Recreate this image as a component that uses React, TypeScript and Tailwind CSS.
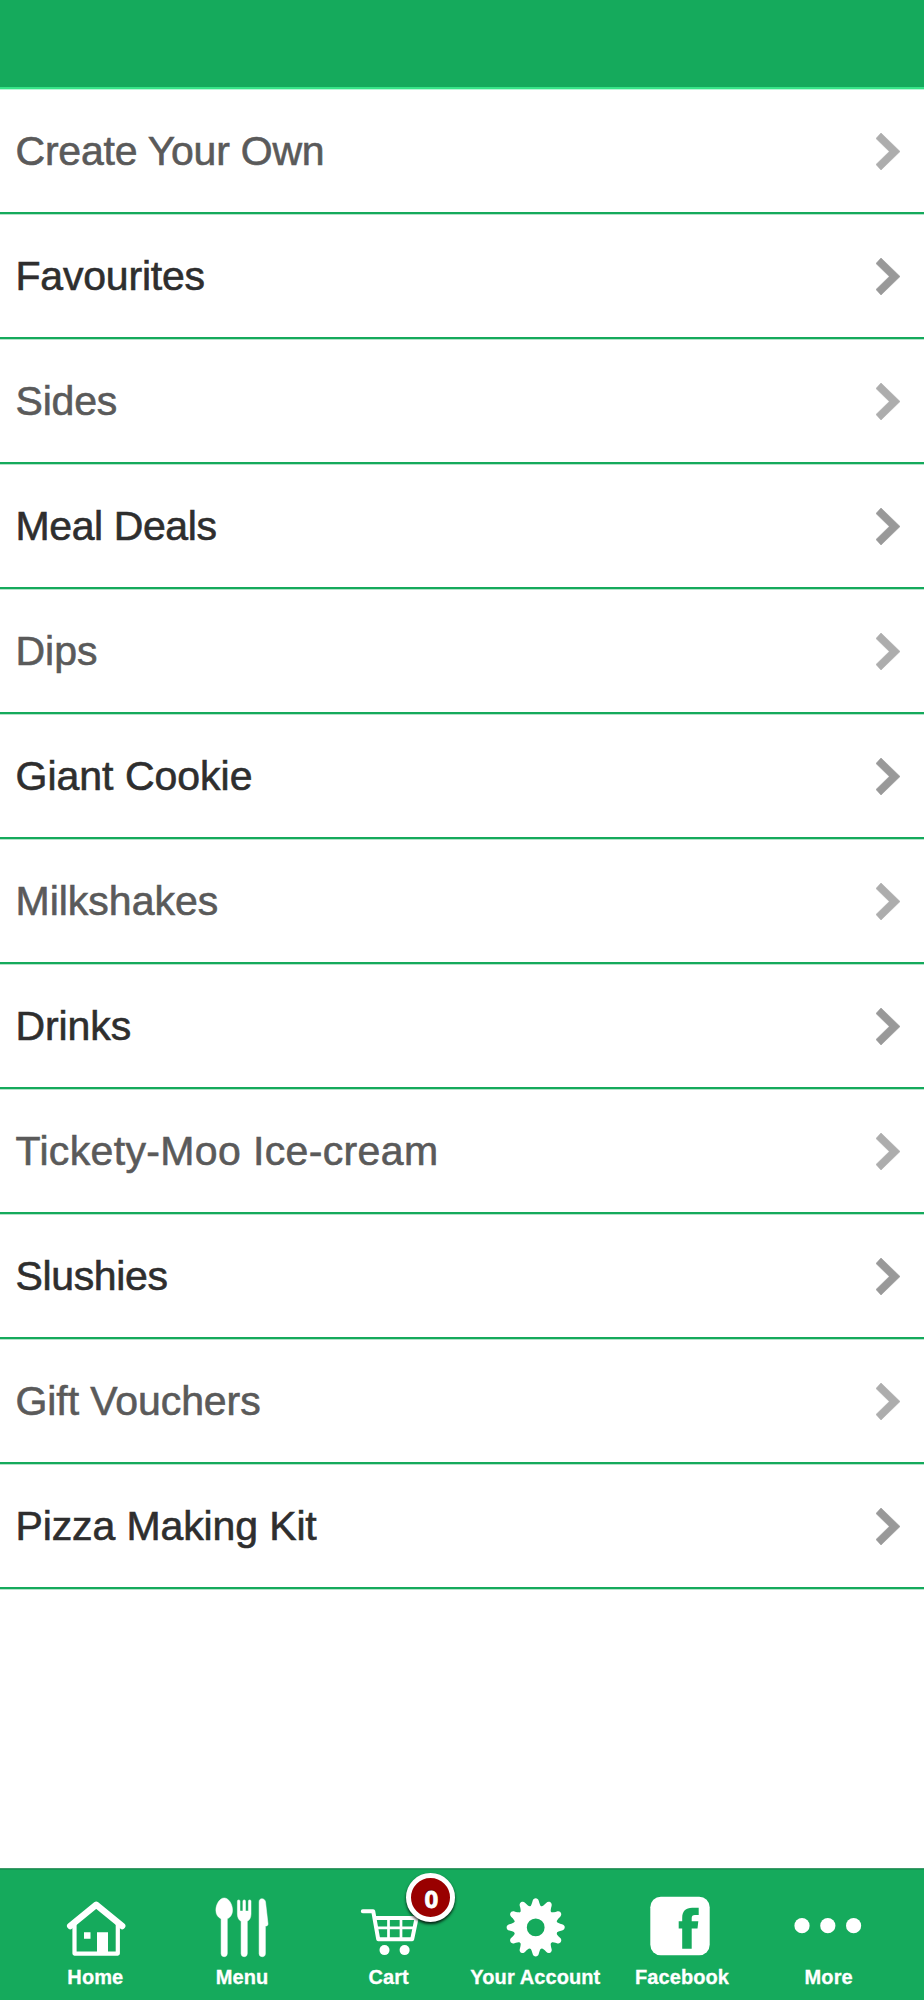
import { ReactNode } from "react";
import clsx from "clsx";

const categories = [
  { name: "Create Your Own", tracking: "tracking-[-0.22px]" },
  { name: "Favourites", tracking: "tracking-[-0.2px]" },
  { name: "Sides", tracking: "tracking-[-0.2px]" },
  { name: "Meal Deals", tracking: "tracking-[-0.4px]" },
  { name: "Dips", tracking: "tracking-normal" },
  { name: "Giant Cookie", tracking: "tracking-normal" },
  { name: "Milkshakes", tracking: "tracking-normal" },
  { name: "Drinks", tracking: "tracking-[-0.1px]" },
  { name: "Tickety-Moo Ice-cream", tracking: "tracking-[0.36px]" },
  { name: "Slushies", tracking: "tracking-[-0.35px]" },
  { name: "Gift Vouchers", tracking: "tracking-[-0.08px]" },
  { name: "Pizza Making Kit", tracking: "tracking-[-0.12px]" },
];

const gearTeeth = Array.from({ length: 12 }, (_, i) => i * 30);

function Chevron() {
  return (
    <svg width="24" height="37" viewBox="0 0 24 37" fill="currentColor" stroke="currentColor" strokeWidth="0.6">
      <path d="M0 5.5 5 0 24 18.5 5 37 0 31.5 13.3 18.5Z" />
    </svg>
  );
}

function Icon({ children }: { children: ReactNode }) {
  return (
    <svg width="64" height="70" viewBox="0 0 64 70" fill="currentColor" className="overflow-visible">
      {children}
    </svg>
  );
}

function HomeIcon() {
  return (
    <Icon>
      <g fill="none" stroke="currentColor" strokeLinejoin="round" strokeLinecap="round">
        <path d="M7.2 36 33.2 14.7 59.2 36" strokeWidth="6.4" />
        <path d="M11.5 34V63.6H54.8V34" strokeWidth="4.2" />
      </g>
      <path d="M21 42.3h6.5v6.5H21zM34 42.3h11v20H34z" />
    </Icon>
  );
}

function MenuIcon() {
  return (
    <Icon>
      <g stroke="currentColor" strokeWidth="0.5">
        <path d="M14.2 8C18.6 8 22.5 14 22.5 20.3c0 4.4-2.4 7.3-5.2 8.5v34.8a3.1 3.1 0 0 1-6.2 0V28.8C8.3 27.6 5.9 24.7 5.9 20.3 5.9 14 9.8 8 14.2 8Z" />
        <path d="M27.4 11.2a1.3 1.3 0 0 1 2.6 0V21h2.9V11.2a1.3 1.3 0 0 1 2.6 0V21h2.9V11.2a1.3 1.3 0 0 1 2.6 0V24c0 3.8-1.6 6.2-3.7 7.3v32.3a3.1 3.1 0 0 1-6.2 0V31.3C29 30.2 27.4 27.8 27.4 24Z" />
        <path d="M49.1 11.8c0-4.2 5.6-4 6.4 0L58 33.8c.1 1.5-.8 2.3-2.6 2.3v27.5a3.15 3.15 0 0 1-6.3 0Z" />
      </g>
    </Icon>
  );
}

function CartIcon() {
  return (
    <Icon>
      <g fill="none" stroke="currentColor" strokeLinejoin="round" strokeLinecap="round">
        <path d="M5.8 21.2H16.2L21.2 49.2H55.2L59.6 28H17.8" strokeWidth="4" />
        <path d="M19.5 37.9H57.5M31.5 28V49M44 28V49" strokeWidth="2.7" />
      </g>
      <circle cx="27.5" cy="60.1" r="5" />
      <circle cx="47.6" cy="60.1" r="5" />
    </Icon>
  );
}

function GearIcon() {
  return (
    <Icon>
      <g transform="translate(32.7 37.4)">
        <circle r="15.4" fill="none" stroke="currentColor" strokeWidth="13" />
        {gearTeeth.map((angle) => (
          <path
            key={angle}
            d="M-5.8-20C-4.6-21.8-3.7-23.6-3.1-26.3-2.4-30 2.4-30 3.1-26.3 3.7-23.6 4.6-21.8 5.8-20Z"
            transform={`rotate(${angle})`}
          />
        ))}
      </g>
    </Icon>
  );
}

function FacebookIcon() {
  return (
    <Icon>
      <rect x="0.3" y="6.7" width="59.4" height="58.6" rx="10.5" />
      <path
        d="M32.2 58.7V38.4H28.7V31.3H32.2V28C32.2 21 35.7 17.7 42.2 17.7H48.7V25H44.9C42.7 25 41.7 26 41.7 28V31.3H48.3L47.5 38.4H41.7V58.7Z"
        fill="#15aa5c"
      />
    </Icon>
  );
}

function MoreIcon() {
  return (
    <Icon>
      <circle cx="5" cy="35.7" r="7.6" />
      <circle cx="30.8" cy="35.7" r="7.6" />
      <circle cx="56.6" cy="35.7" r="7.6" />
    </Icon>
  );
}

const tabs = [
  { label: "Home", icon: <HomeIcon /> },
  { label: "Menu", icon: <MenuIcon /> },
  { label: "Cart", icon: <CartIcon />, badge: 0 },
  { label: "Your Account", icon: <GearIcon /> },
  { label: "Facebook", icon: <FacebookIcon /> },
  { label: "More", icon: <MoreIcon /> },
];

export default function App() {
  return (
    <div className="flex h-[2000px] w-[924px] flex-col bg-white font-['Liberation_Sans',Arial,sans-serif]">
      <header className="h-[89px] shrink-0 border-b-2 border-[#36e588] bg-[#15aa5c] shadow-[0_1px_0_#b8f7d6]" />

      <ul className="flex-1">
        {categories.map(({ name, tracking }, i) => (
          <li
            key={name}
            className={clsx(
              "flex h-[125px] items-center justify-between border-b-2 border-[#15aa5c] pt-px pr-6 pl-[15.5px] shadow-[0_1px_0_#b5e3cb]",
              i % 2 === 0 ? "text-[#5a5a5a]" : "text-[#2e2e2e]"
            )}
          >
            <span className={clsx("text-[41px] leading-none [-webkit-text-stroke:0.6px]", tracking)}>{name}</span>
            <span className={clsx("pt-px", i % 2 === 0 ? "text-[#adadad]" : "text-[#999999]")}>
              <Chevron />
            </span>
          </li>
        ))}
      </ul>

      <nav className="flex h-[132px] shrink-0 border-t border-[#3d9b69] bg-[#15aa5c] px-[22px] text-white shadow-[inset_0_1px_0_#159552]">
        {tabs.map((tab) => (
          <a key={tab.label} className="relative flex flex-1 flex-col items-center pt-[21px]">
            {tab.icon}
            <span className="mt-[5px] text-[20px] leading-6 font-bold tracking-[0.1px] whitespace-nowrap [-webkit-text-stroke:0.3px]">
              {tab.label}
            </span>
            {tab.badge !== undefined && (
              <span className="absolute top-[4px] left-[91px] flex size-[49px] items-center justify-center rounded-full border-[5px] border-white bg-[#990000] pt-[3px] pl-px font-['Open_Sans',sans-serif] text-[24px] leading-none font-bold shadow-[0_2px_3px_rgba(0,0,0,0.8)] [-webkit-text-stroke:0.8px] [text-shadow:0_-1px_1px_rgba(0,0,0,0.7)]">
                {tab.badge}
              </span>
            )}
          </a>
        ))}
      </nav>
    </div>
  );
}
